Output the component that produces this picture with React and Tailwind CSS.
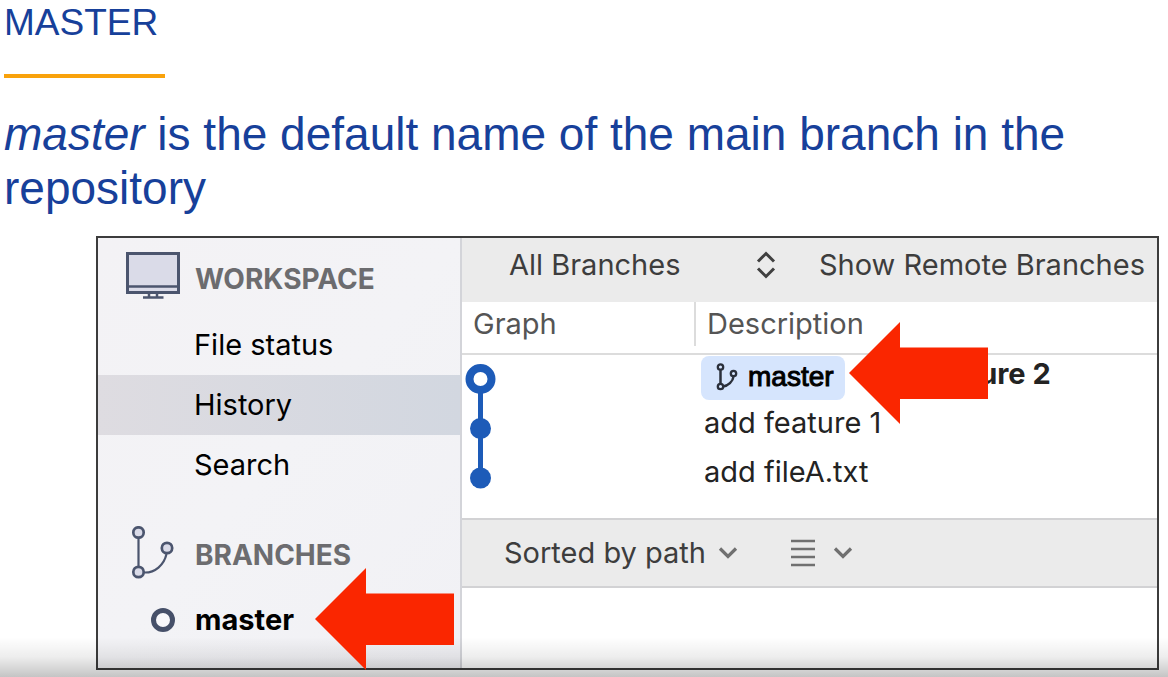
const menuItems = ["File status", "History", "Search"];

function Monitor() {
  return (
    <svg className="h-[50px] w-[54px] shrink-0" viewBox="0 0 54 50" fill="none" stroke="#4b556e" strokeWidth="3" aria-hidden="true">
      <rect x="1.500" y="1.500" width="51" height="39" fill="#dadbe8" />
      <path d="M1.500 34.500H52.500" strokeWidth="2.500" />
      <path d="M23 40v5M31 40v5" strokeWidth="2.500" />
      <path d="M17 45.500H37.500" strokeWidth="2.500" />
    </svg>
  );
}

function BranchIcon() {
  return (
    <svg className="h-[54px] w-[44px] shrink-0" viewBox="0 0 44 54" stroke="#4b556e" aria-hidden="true">
      <path d="M7.500 12V41M13 46.500C24 47 33 39 35.500 28" fill="none" strokeWidth="2.200" />
      <g fill="#dadbe8" strokeWidth="2.700">
        <circle cx="7.500" cy="6.500" r="5.200" />
        <circle cx="36" cy="22" r="5.200" />
        <circle cx="7.500" cy="46" r="5.200" />
      </g>
    </svg>
  );
}

function SmallBranchIcon() {
  return (
    <svg className="h-7 w-6 shrink-0" viewBox="0 0 24 28" fill="none" stroke="#2b303b" strokeWidth="2.300" aria-hidden="true">
      <path d="M4.500 6.500V21M7 23.500C12 23 17 18.500 17.500 13.500" strokeWidth="2.500" />
      <circle cx="4.500" cy="4" r="2.700" />
      <circle cx="17.500" cy="10.500" r="2.700" />
      <circle cx="4.500" cy="23.500" r="2.700" />
    </svg>
  );
}

function Chevron() {
  return (
    <svg className="h-3 w-5 shrink-0" viewBox="0 0 20 12" fill="none" stroke="#707070" strokeWidth="3.200" aria-hidden="true">
      <path d="M2 1.500L10 9.500L18 1.500" />
    </svg>
  );
}

function Arrow() {
  return (
    <svg className="h-[102px] w-[139px]" viewBox="0 0 139 102" fill="#fa2600" aria-hidden="true">
      <path d="M0 51L51 0V25.500H139V77H51V102Z" />
    </svg>
  );
}

function Sidebar() {
  return (
    <nav className="w-[364px] shrink-0 border-r-2 border-[#d3d4d9] bg-linear-to-br from-[#f3f2f5] via-[#f3f3f6] to-[#f1f1f5] text-[29px] text-black">
      <div className="flex h-[77px] items-center gap-[15px] pl-7">
        <Monitor />
        <h2 className="pt-1 text-[28px] font-bold text-[#6c6c6f]">WORKSPACE</h2>
      </div>
      <ul>
        {menuItems.map((item) => (
          <li key={item}>
            <a
              href="#"
              aria-current={item === "History" ? "page" : undefined}
              className="flex h-[60px] items-center pl-24 aria-[current]:bg-linear-to-r aria-[current]:from-[#dedce1] aria-[current]:to-[#d2d7e0]"
            >
              {item}
            </a>
          </li>
        ))}
      </ul>
      <div className="mb-[2px] mt-[23px] flex h-[70px] items-center gap-5 pl-[33px]">
        <BranchIcon />
        <h2 className="pt-1 text-[28px] font-bold text-[#6c6c6f]">BRANCHES</h2>
      </div>
      <div className="relative">
        <a href="#" className="flex h-[60px] items-center gap-5 pl-[53px] font-bold">
          <svg className="size-6" viewBox="0 0 24 24" fill="#f7f7fa" stroke="#465069" strokeWidth="5" aria-hidden="true">
            <circle cx="12" cy="12" r="9.500" />
          </svg>
          master
        </a>
        <div className="absolute -top-[22px] left-[217px] z-20">
          <Arrow />
        </div>
      </div>
    </nav>
  );
}

function CommitTable() {
  return (
    <table className="w-full table-fixed border-collapse text-left text-[29px] text-[#232323]">
      <colgroup>
        <col className="w-[234px]" />
        <col />
      </colgroup>
      <thead className="border-b-2 border-[#dcdcdc] text-[#555]">
        <tr className="h-[52px]">
          <th className="p-0 align-top font-normal">
            <div className="h-11 border-r-2 border-[#dcdcdc] pl-[11px] leading-[44px]">Graph</div>
          </th>
          <th className="p-0 align-top font-normal">
            <div className="h-11 pl-[11px] leading-[44px]">Description</div>
          </th>
        </tr>
      </thead>
      <tbody>
        <tr className="h-[46px]">
          <td rowSpan={3} className="p-0 align-top">
            <svg className="h-[140px] w-9" viewBox="0 0 36 140" fill="#1d5bb8" role="img" aria-label="Commit graph">
              <path d="M18.500 24V123" stroke="#1d5bb8" strokeWidth="5" />
              <circle cx="18.500" cy="24" r="11" fill="white" stroke="#1d5bb8" strokeWidth="8" />
              <circle cx="18.500" cy="73.500" r="10.500" />
              <circle cx="18.500" cy="123" r="10.500" />
            </svg>
          </td>
          <td className="relative p-0 align-top">
            <div className="flex gap-[18px] pl-[5px] pt-px">
              <span className="flex h-[44px] w-[144px] shrink-0 items-center gap-2 rounded-lg bg-[#d6e5fd] pb-[2px] pl-[15px] font-['Liberation_Sans',Arial,sans-serif] text-[28px] text-black [-webkit-text-stroke:1px_black]">
                <SmallBranchIcon />
                master
              </span>
              <span className="whitespace-nowrap font-bold leading-[36px]">add feature 2</span>
            </div>
            <div className="absolute -top-[33px] left-[153px] z-20">
              <Arrow />
            </div>
          </td>
        </tr>
        <tr className="h-[45px]">
          <td className="p-0 pl-2">add feature 1</td>
        </tr>
        <tr className="h-[54px]">
          <td className="p-0 pl-2">add fileA.txt</td>
        </tr>
      </tbody>
    </table>
  );
}

export default function App() {
  return (
    <main className="relative flex min-h-screen flex-col bg-white pb-[7px] pt-px font-['Liberation_Sans',Arial,sans-serif] text-[#17409a]">
      <h1 className="pl-1 text-[37px] leading-[44px]">MASTER</h1>
      <div className="ml-1 mt-[29px] h-1 w-[161px] bg-[#f9a20b]" />
      <p className="mt-[29px] pl-1 text-[46px] leading-[54px]">
        <em>master</em> is the default name of the main branch in the repository
      </p>
      <section className="ml-24 mr-[9px] mt-[21px] flex flex-1 border-2 border-[#3c3c3c] font-['Inter',sans-serif]">
        <Sidebar />
        <div className="min-w-0 flex-1 bg-white">
          <div className="flex h-[64px] items-center bg-[#ebebeb] pb-[10px] pl-[47px] text-[29px] text-[#3d3d3d]">
            <div className="relative w-[267px]">
              <select aria-label="Branch filter" className="w-full appearance-none bg-transparent">
                <option>All Branches</option>
              </select>
              <svg className="pointer-events-none absolute right-0 top-1/2 h-7 w-5 -translate-y-1/2" viewBox="0 0 20 28" fill="none" stroke="#404040" strokeWidth="3" aria-hidden="true">
                <path d="M2 10.500L10 2.500L18 10.500M2 17.500L10 25.500L18 17.500" />
              </svg>
            </div>
            <button type="button" className="ml-[43px] whitespace-nowrap">Show Remote Branches</button>
          </div>
          <CommitTable />
          <div className="mt-[19px] flex h-[70px] items-center border-y-2 border-[#d2d2d4] bg-[#ebebeb] pl-[42px] text-[29px] text-[#3d3d3d]">
            <button type="button" className="flex items-center gap-3 whitespace-nowrap">
              Sorted by path
              <Chevron />
            </button>
            <button type="button" aria-label="View options" className="ml-[53px] flex items-center gap-[18px]">
              <svg className="h-7 w-6" viewBox="0 0 24 28" stroke="#707070" strokeWidth="2.500" aria-hidden="true">
                <path d="M0 2H24M0 10H24M0 18H24M0 26H24" />
              </svg>
              <Chevron />
            </button>
          </div>
        </div>
      </section>
      <div className="pointer-events-none absolute inset-x-0 bottom-0 z-10 h-10 bg-linear-to-b from-black/0 via-black/7 to-black/23" />
    </main>
  );
}
